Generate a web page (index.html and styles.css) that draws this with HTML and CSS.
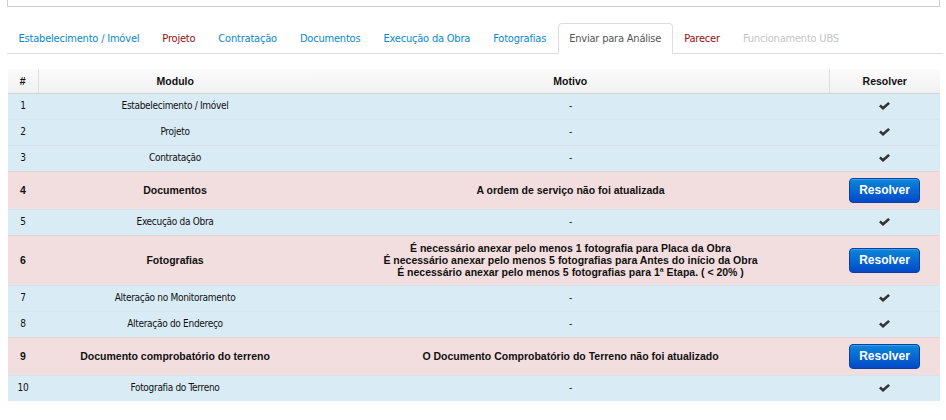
FILE: index.html
```html
<!DOCTYPE html>
<html lang="pt-BR">
<head>
<meta charset="utf-8">
<title>Enviar para Análise</title>
<link rel="stylesheet" href="styles.css">
</head>
<body>
<div class="topbox"></div>
<ul class="tabs">
  <li class="tab"><a class="link">Estabelecimento / Imóvel</a></li>
  <li class="tab"><a class="link warn">Projeto</a></li>
  <li class="tab"><a class="link">Contratação</a></li>
  <li class="tab"><a class="link">Documentos</a></li>
  <li class="tab"><a class="link">Execução da Obra</a></li>
  <li class="tab"><a class="link">Fotografias</a></li>
  <li class="tab active"><a class="link">Enviar para Análise</a></li>
  <li class="tab"><a class="link warn">Parecer</a></li>
  <li class="tab"><a class="link disabled">Funcionamento UBS</a></li>
</ul>
<table class="grid">
  <thead>
    <tr>
      <th class="c-num sep">#</th>
      <th class="c-mod">Modulo</th>
      <th class="c-mot sep">Motivo</th>
      <th class="c-res">Resolver</th>
    </tr>
  </thead>
  <tbody>
    <tr class="ok"><td>1</td><td>Estabelecimento / Imóvel</td><td>-</td><td><svg class="check" viewBox="0 0 11 8"><polygon points="0,4.2 1.8,2.4 4,4.5 9.2,0 11,1.8 4,8"/></svg></td></tr>
    <tr class="ok"><td>2</td><td>Projeto</td><td>-</td><td><svg class="check" viewBox="0 0 11 8"><polygon points="0,4.2 1.8,2.4 4,4.5 9.2,0 11,1.8 4,8"/></svg></td></tr>
    <tr class="ok"><td>3</td><td>Contratação</td><td>-</td><td><svg class="check" viewBox="0 0 11 8"><polygon points="0,4.2 1.8,2.4 4,4.5 9.2,0 11,1.8 4,8"/></svg></td></tr>
    <tr class="bad"><td>4</td><td>Documentos</td><td>A ordem de serviço não foi atualizada</td><td class="act"><button class="btn">Resolver</button></td></tr>
    <tr class="ok"><td>5</td><td>Execução da Obra</td><td>-</td><td><svg class="check" viewBox="0 0 11 8"><polygon points="0,4.2 1.8,2.4 4,4.5 9.2,0 11,1.8 4,8"/></svg></td></tr>
    <tr class="bad"><td>6</td><td>Fotografias</td><td>É necessário anexar pelo menos 1 fotografia para Placa da Obra<br>É necessário anexar pelo menos 5 fotografias para Antes do início da Obra<br>É necessário anexar pelo menos 5 fotografias para 1ª Etapa. ( &lt; 20% )</td><td class="act"><button class="btn">Resolver</button></td></tr>
    <tr class="ok"><td>7</td><td>Alteração no Monitoramento</td><td>-</td><td><svg class="check" viewBox="0 0 11 8"><polygon points="0,4.2 1.8,2.4 4,4.5 9.2,0 11,1.8 4,8"/></svg></td></tr>
    <tr class="ok"><td>8</td><td>Alteração do Endereço</td><td>-</td><td><svg class="check" viewBox="0 0 11 8"><polygon points="0,4.2 1.8,2.4 4,4.5 9.2,0 11,1.8 4,8"/></svg></td></tr>
    <tr class="bad"><td>9</td><td>Documento comprobatório do terreno</td><td>O Documento Comprobatório do Terreno não foi atualizado</td><td class="act"><button class="btn">Resolver</button></td></tr>
    <tr class="ok"><td>10</td><td>Fotografia do Terreno</td><td>-</td><td><svg class="check" viewBox="0 0 11 8"><polygon points="0,4.2 1.8,2.4 4,4.5 9.2,0 11,1.8 4,8"/></svg></td></tr>
  </tbody>
</table>
</body>
</html>
```
FILE: styles.css
```css
* { box-sizing: border-box; }
body {
  margin: 0;
  background: #fff;
  font-family: "DejaVu Sans Condensed", "DejaVu Sans", sans-serif;
  font-size: 10px;
  color: #111;
}
.topbox {
  margin: 0 6px 0 7px;
  height: 7px;
  border: 1px solid #cfcfcf;
  border-top: none;
}
.tabs {
  list-style: none;
  margin: 16px 3px 0 7px;
  padding: 0;
  display: flex;
  border-bottom: 1px solid #ddd;
}
.tab {
  flex: none;
  margin-bottom: -1px;
}
.link {
  display: block;
  height: 31px;
  line-height: 30px;
  padding: 0 10.5px;
  border: 1px solid transparent;
  border-radius: 4px 4px 0 0;
  font-size: 11px;
  letter-spacing: -0.2px;
  white-space: nowrap;
  color: #0a88cf;
}
.link.warn { color: #9b0c0c; }
.link.disabled { color: #c4c4c4; }
.tab.active .link {
  color: #555;
  background: #fff;
  border-color: #ddd #ddd transparent;
}
.grid {
  margin: 15px 0 0 8px;
  width: 932px;
  border-collapse: collapse;
  table-layout: fixed;
}
.grid th {
  height: 24px;
  padding: 0 4px;
  font-family: "Liberation Sans", sans-serif;
  font-weight: bold;
  font-size: 10.5px;
  color: #111;
  text-align: center;
  background: linear-gradient(#fbfbfb, #f1f1f1);
  border-bottom: 1px solid #d2d2d2;
}
.grid th.sep { border-right: 1px solid #dedede; }
.c-num { width: 30px; }
.c-mod { width: 274px; }
.c-mot { width: 517px; }
.c-res { width: 111px; }
.grid td {
  padding: 6px 4px 7px;
  line-height: 12px;
  letter-spacing: -0.3px;
  text-align: center;
  vertical-align: middle;
  border-top: 1px solid #d7e3ea;
}
.grid td.act { padding: 6px 4px; }
.ok td { background: #d9ebf5; }
.bad td {
  background: #f2dede;
  font-family: "Liberation Sans", sans-serif;
  font-size: 10.5px;
  font-weight: bold;
  letter-spacing: 0;
  border-top-color: #e6d3d3;
}
.check {
  display: block;
  margin: 0 auto;
  width: 11px;
  height: 8px;
  fill: #333;
}
.btn {
  display: block;
  margin: 0 auto;
  width: 71px;
  height: 25px;
  padding: 0;
  font-family: "Liberation Sans", sans-serif;
  font-size: 12px;
  font-weight: bold;
  color: #fff;
  background: linear-gradient(#0a87d9, #0449c8);
  border: 1px solid #0840a8;
  border-radius: 4px;
  box-shadow: inset 0 1px 0 rgba(255,255,255,0.2);
}
```
